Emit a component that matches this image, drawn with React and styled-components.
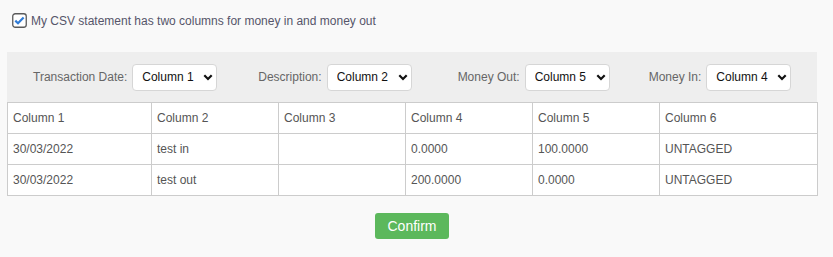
import React from 'react';
import styled, { createGlobalStyle } from 'styled-components';

const GlobalStyle = createGlobalStyle`
	body {
		margin: 0;
		background: #f9f9f9;
		font-family: "Liberation Sans", Arial, sans-serif;
		font-size: 12px;
		color: #555;
	}
`;

const Page = styled.div`
	width: 810px;
	padding: 13px 0 0 7px;
`;

const CheckRow = styled.label`
	display: flex;
	align-items: center;
	gap: 4px;
	margin-left: 5px;
	height: 15px;
	color: #56556a;
	font-size: 12px;
`;

const Panel = styled.div`
	margin-top: 24px;
	background: #eeeeee;
`;

const Toolbar = styled.div`
	display: flex;
	align-items: center;
	height: 50px;
	padding: 0 0 0 26px;
`;

const Field = styled.div`
	display: flex;
	align-items: center;
	gap: 5px;
	margin-left: ${ props => props.$offset }px;
	color: #666;
`;

const SelectWrap = styled.div`
	position: relative;
	display: flex;
	align-items: center;
`;

const Select = styled.select`
	appearance: none;
	width: 85px;
	height: 27px;
	padding: 0 18px 0 9px;
	border: 1px solid #d6d6d6;
	border-radius: 4px;
	background: #fff;
	color: #111;
	font-family: inherit;
	font-size: 12px;
	outline: none;
`;

const Chevron = styled.svg`
	position: absolute;
	right: 4px;
	top: 10px;
	pointer-events: none;
`;

const Table = styled.table`
	width: 810px;
	border-collapse: collapse;
	background: #fff;
	table-layout: fixed;

	td {
		height: 30px;
		padding: 0 5px;
		border: 1px solid #cccccc;
		color: #555;
		font-size: 12px;
	}
`;

const Actions = styled.div`
	display: flex;
	justify-content: center;
	padding-top: 17px;
`;

const Button = styled.button`
	width: 74px;
	height: 26px;
	border: none;
	border-radius: 3px;
	background: #5cb85c;
	color: #fff;
	font-family: inherit;
	font-size: 14px;
	cursor: pointer;
`;

const fields = [
	{ label: 'Transaction Date:', value: 'Column 1', offset: 0 },
	{ label: 'Description:', value: 'Column 2', offset: 41 },
	{ label: 'Money Out:', value: 'Column 5', offset: 46 },
	{ label: 'Money In:', value: 'Column 4', offset: 39 },
];

const columns = [ 'Column 1', 'Column 2', 'Column 3', 'Column 4', 'Column 5', 'Column 6' ];
const widths = [ 144, 127, 127, 127, 127, 158 ];

const rows = [
	[ 'Column 1', 'Column 2', 'Column 3', 'Column 4', 'Column 5', 'Column 6' ],
	[ '30/03/2022', 'test in', '', '0.0000', '100.0000', 'UNTAGGED' ],
	[ '30/03/2022', 'test out', '', '200.0000', '0.0000', 'UNTAGGED' ],
];

function CheckIcon() {
	return (
		<svg width="15" height="15" viewBox="0 0 15 15">
			<rect x="0.75" y="0.75" width="13.5" height="13.5" rx="2.5" fill="#fff" stroke="#5a5a5a" strokeWidth="1.3" />
			<path d="M3.3 7.6 L6 10.2 L11.6 4.4" fill="none" stroke="#2f7bd6" strokeWidth="2.2" />
		</svg>
	);
}

function ColumnSelect( { value } ) {
	return (
		<SelectWrap>
			<Select defaultValue={ value }>
				{ columns.map( col => <option key={ col }>{ col }</option> ) }
			</Select>
			<Chevron width="10" height="7" viewBox="0 0 10 7">
				<path d="M1.3 1.3 L5 5 L8.7 1.3" fill="none" stroke="#111" strokeWidth="2.2" />
			</Chevron>
		</SelectWrap>
	);
}

export default function App() {
	return (
		<>
			<GlobalStyle />
			<Page>
				<CheckRow>
					<CheckIcon />
					<span>My CSV statement has two columns for money in and money out</span>
				</CheckRow>
				<Panel>
					<Toolbar>
						{ fields.map( field => (
							<Field key={ field.label } $offset={ field.offset }>
								<span>{ field.label }</span>
								<ColumnSelect value={ field.value } />
							</Field>
						) ) }
					</Toolbar>
					<Table>
						<colgroup>
							{ widths.map( ( w, i ) => <col key={ i } style={ { width: w } } /> ) }
						</colgroup>
						<tbody>
							{ rows.map( ( row, r ) => (
								<tr key={ r }>
									{ row.map( ( cell, c ) => <td key={ c }>{ cell }</td> ) }
								</tr>
							) ) }
						</tbody>
					</Table>
				</Panel>
				<Actions>
					<Button>Confirm</Button>
				</Actions>
			</Page>
		</>
	);
}
